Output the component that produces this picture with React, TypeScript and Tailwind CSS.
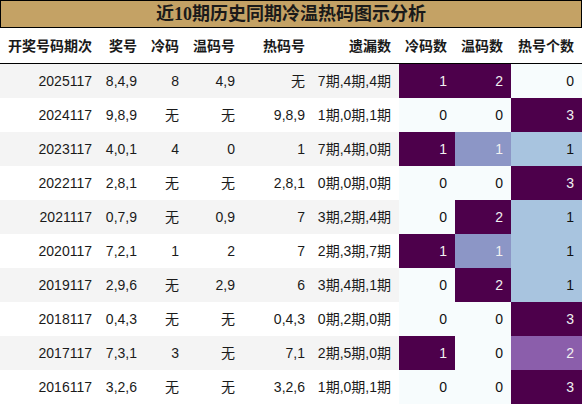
import React from "react";

type Row = {
  period: string;
  nums: string;
  cold: string;
  warm: string;
  hot: string;
  miss: string;
  c: number;
  w: number;
  h: number;
};

const rows: Row[] = [
  { period: "2025117", nums: "8,4,9", cold: "8", warm: "4,9", hot: "无", miss: "7期,4期,4期", c: 1, w: 2, h: 0 },
  { period: "2024117", nums: "9,8,9", cold: "无", warm: "无", hot: "9,8,9", miss: "1期,0期,1期", c: 0, w: 0, h: 3 },
  { period: "2023117", nums: "4,0,1", cold: "4", warm: "0", hot: "1", miss: "7期,4期,0期", c: 1, w: 1, h: 1 },
  { period: "2022117", nums: "2,8,1", cold: "无", warm: "无", hot: "2,8,1", miss: "0期,0期,0期", c: 0, w: 0, h: 3 },
  { period: "2021117", nums: "0,7,9", cold: "无", warm: "0,9", hot: "7", miss: "3期,2期,4期", c: 0, w: 2, h: 1 },
  { period: "2020117", nums: "7,2,1", cold: "1", warm: "2", hot: "7", miss: "2期,3期,7期", c: 1, w: 1, h: 1 },
  { period: "2019117", nums: "2,9,6", cold: "无", warm: "2,9", hot: "6", miss: "3期,4期,1期", c: 0, w: 2, h: 1 },
  { period: "2018117", nums: "0,4,3", cold: "无", warm: "无", hot: "0,4,3", miss: "0期,2期,0期", c: 0, w: 0, h: 3 },
  { period: "2017117", nums: "7,3,1", cold: "3", warm: "无", hot: "7,1", miss: "2期,5期,0期", c: 1, w: 0, h: 2 },
  { period: "2016117", nums: "3,2,6", cold: "无", warm: "无", hot: "3,2,6", miss: "1期,0期,1期", c: 0, w: 0, h: 3 },
];

const coldCls: Record<number, string> = {
  0: "bg-[#f7fcfd] text-[#111]",
  1: "bg-[#4d004b] text-[#f1f1f1]",
};
const warmCls: Record<number, string> = {
  0: "bg-[#f7fcfd] text-[#111]",
  1: "bg-[#8c96c6] text-[#f1f1f1]",
  2: "bg-[#4d004b] text-[#f1f1f1]",
};
const hotCls: Record<number, string> = {
  0: "bg-[#f7fcfd] text-[#111]",
  1: "bg-[#a8c4df] text-[#111]",
  2: "bg-[#8b5eab] text-[#f1f1f1]",
  3: "bg-[#4d004b] text-[#f1f1f1]",
};

const grid = "grid grid-cols-[100px_45px_42px_56px_70px_86px_56px_56px_71px]";
const cell = "flex items-center justify-end pr-2";

export default function App() {
  const headers = ["开奖号码期次", "奖号", "冷码", "温码号", "热码号", "遗漏数", "冷码数", "温码数", "热号个数"];
  return (
    <div
      className="w-[582px] h-[405px] bg-white overflow-hidden text-[14px] text-[#1a1a1a]"
      style={{ fontFamily: '"Liberation Sans", "Noto Sans CJK SC", sans-serif' }}
    >
      <div
        className="h-[28px] border border-black bg-[#c4a265] flex items-center justify-center text-[18px] font-bold text-[#1a1a1a]"
        style={{ fontFamily: '"Liberation Serif", "Noto Sans CJK SC", serif' }}
      >
        近10期历史同期冷温热码图示分析
      </div>
      <div className={`${grid} h-[36px] border-b border-black font-bold`} style={{ fontFamily: '"Noto Sans CJK SC", "Liberation Sans", sans-serif' }}>
        {headers.map((h) => (
          <div key={h} className={`${cell} whitespace-nowrap`}>
            {h}
          </div>
        ))}
      </div>
      {rows.map((r, i) => (
        <div key={r.period} className={`${grid} h-[34px] ${i % 2 === 0 ? "bg-[#f4f4f4]" : "bg-white"}`}>
          <div className={cell}>{r.period}</div>
          <div className={cell}>{r.nums}</div>
          <div className={cell}>{r.cold}</div>
          <div className={cell}>{r.warm}</div>
          <div className={cell}>{r.hot}</div>
          <div className={`${cell} whitespace-nowrap`}>{r.miss}</div>
          <div className={`${cell} ${coldCls[r.c]}`}>{r.c}</div>
          <div className={`${cell} ${warmCls[r.w]}`}>{r.w}</div>
          <div className={`${cell} ${hotCls[r.h]}`}>{r.h}</div>
        </div>
      ))}
    </div>
  );
}
